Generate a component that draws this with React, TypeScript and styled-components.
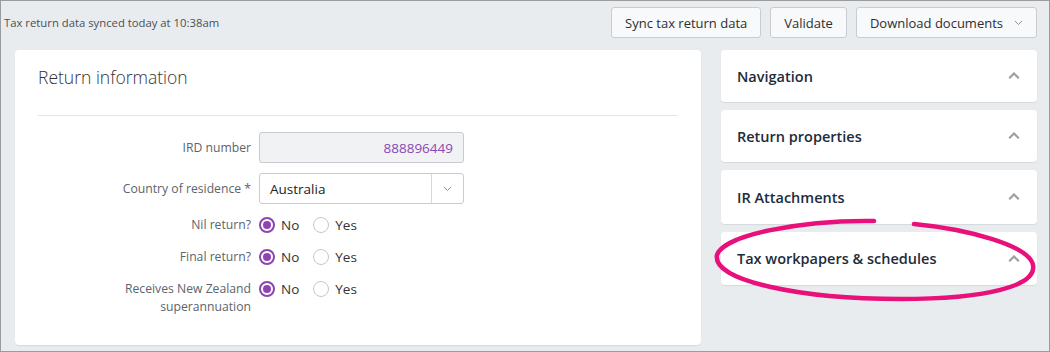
import styled, { createGlobalStyle } from "styled-components"

const GlobalStyle = createGlobalStyle`
    * { box-sizing: border-box; }
    body {
        margin: 0;
        font-family: "Open Sans", "Noto Sans", Arial, sans-serif;
        color: #333;
    }
`

const Page = styled.div`
    position: relative;
    width: 1050px;
    height: 352px;
    border: 1px solid #9c9c9c;
    background: #e9ecef;
    overflow: hidden;
`

const TopBar = styled.div`
    height: 49px;
    padding: 6px 12px 0 3px;
    display: flex;
    align-items: flex-start;
    justify-content: space-between;
`

const SyncText = styled.span`
    font-size: 11.3px;
    color: #4a4f55;
    line-height: 31px;
`

const Actions = styled.div`
    display: flex;
    gap: 9px;
`

const Button = styled.button`
    height: 31px;
    padding: 0 13px;
    display: flex;
    align-items: center;
    gap: 11px;
    font-family: inherit;
    font-size: 13px;
    color: #2b2f33;
    background: #f8f9fa;
    border: 1px solid #c9ccd0;
    border-radius: 3px;
`

const Main = styled.div`
    display: flex;
    gap: 20px;
    padding: 0 12px 0 14px;
`

const Card = styled.div`
    background: #fff;
    border-radius: 4px;
    box-shadow: 0 1px 1px rgba(0, 0, 0, 0.08);
`

const ReturnCard = styled(Card)`
    width: 686px;
    height: 295px;
    padding: 0 23px;
`

const CardTitle = styled.h2`
    margin: 0;
    height: 66px;
    padding-top: 16px;
    font-size: 17.5px;
    line-height: 22px;
    font-weight: 300;
    color: #333;
    border-bottom: 1px solid #e4e6e8;
`

const Form = styled.div`
    display: grid;
    grid-template-columns: 213px 205px;
    column-gap: 8px;
    row-gap: 10px;
    padding-top: 16px;
`

const Label = styled.div<{ $tall?: boolean }>`
    font-size: 12.2px;
    color: #5d646c;
    text-align: right;
    line-height: 18px;
    align-self: ${p => (p.$tall ? "start" : "center")};
    padding-top: ${p => (p.$tall ? "2px" : "0")};
`

const ReadOnlyInput = styled.div`
    height: 31px;
    padding: 0 10px;
    display: flex;
    align-items: center;
    justify-content: flex-end;
    font-size: 13.5px;
    color: #8b49b5;
    background: #f1f2f4;
    border: 1px solid #c8cbcf;
    border-radius: 3px;
`

const Select = styled.div`
    height: 31px;
    display: flex;
    border: 1px solid #c8cbcf;
    border-radius: 3px;
    background: #fff;
`

const SelectValue = styled.div`
    flex: 1;
    padding: 0 10px;
    display: flex;
    align-items: center;
    font-size: 13.5px;
    color: #222;
`

const SelectToggle = styled.div`
    width: 32px;
    display: flex;
    align-items: center;
    justify-content: center;
    border-left: 1px solid #d6d8db;
`

const RadioGroup = styled.div`
    height: 22px;
    display: flex;
    align-items: center;
    gap: 14px;
    align-self: start;
`

const RadioOption = styled.label`
    display: flex;
    align-items: center;
    gap: 6px;
    font-size: 13.5px;
    color: #333;
`

const RadioDot = styled.span<{ $checked?: boolean }>`
    width: 16px;
    height: 16px;
    border-radius: 50%;
    border: ${p => (p.$checked ? "2px solid #8e44b0" : "1.5px solid #c4c7cb")};
    display: flex;
    align-items: center;
    justify-content: center;
    &::after {
        content: "";
        width: 8px;
        height: 8px;
        border-radius: 50%;
        background: ${p => (p.$checked ? "#8e44b0" : "transparent")};
    }
`

const SideColumn = styled.div`
    width: 316px;
    display: flex;
    flex-direction: column;
    gap: 8px;
`

const Panel = styled(Card)<{ $h: number }>`
    height: ${p => p.$h}px;
    padding: 0 17px 0 16px;
    display: flex;
    align-items: center;
    justify-content: space-between;
`

const PanelTitle = styled.span`
    font-size: 14.5px;
    font-weight: 600;
    color: #1e2b3b;
`

const Annotation = styled.svg`
    position: absolute;
    left: 0;
    top: 0;
    pointer-events: none;
`

const Chevron = ({ up, size = 10, color = "#9aa0a6" }: { up?: boolean; size?: number; color?: string }) => (
    <svg width={size} height={size * 0.6} viewBox="0 0 10 6">
        <path
            d={up ? "M1 5.2 L5 1.2 L9 5.2" : "M1 1 L5 5 L9 1"}
            fill="none"
            stroke={color}
            strokeWidth={up ? 1.8 : 1.1}
        />
    </svg>
)

function Radios() {
    return (
        <RadioGroup>
            <RadioOption><RadioDot $checked />No</RadioOption>
            <RadioOption><RadioDot />Yes</RadioOption>
        </RadioGroup>
    )
}

const panels = [
    { title: "Navigation", h: 52 },
    { title: "Return properties", h: 52 },
    { title: "IR Attachments", h: 54 },
    { title: "Tax workpapers & schedules", h: 53 },
]

function App() {
    return (
        <Page>
            <GlobalStyle />
            <TopBar>
                <SyncText>Tax return data synced today at 10:38am</SyncText>
                <Actions>
                    <Button>Sync tax return data</Button>
                    <Button>Validate</Button>
                    <Button>Download documents <Chevron size={9} color="#8a9096" /></Button>
                </Actions>
            </TopBar>
            <Main>
                <ReturnCard>
                    <CardTitle>Return information</CardTitle>
                    <Form>
                        <Label>IRD number</Label>
                        <ReadOnlyInput>888896449</ReadOnlyInput>
                        <Label>Country of residence *</Label>
                        <Select>
                            <SelectValue>Australia</SelectValue>
                            <SelectToggle><Chevron size={9} color="#8a9096" /></SelectToggle>
                        </Select>
                        <Label $tall>Nil return?</Label>
                        <Radios />
                        <Label $tall>Final return?</Label>
                        <Radios />
                        <Label $tall>Receives New Zealand<br />superannuation</Label>
                        <Radios />
                    </Form>
                </ReturnCard>
                <SideColumn>
                    {panels.map(p => (
                        <Panel key={p.title} $h={p.h}>
                            <PanelTitle>{p.title}</PanelTitle>
                            <Chevron up size={12} />
                        </Panel>
                    ))}
                </SideColumn>
            </Main>
            <Annotation width="1050" height="352">
                <path
                    d="M873 220 C800 219, 722 234, 716 254 C711 280, 800 298, 900 298 C985 298, 1036 285, 1032 264 C1028 244, 965 228, 913 223"
                    fill="none"
                    stroke="#e8107a"
                    strokeWidth="4.5"
                    strokeLinecap="round"
                />
            </Annotation>
        </Page>
    )
}

export default App
